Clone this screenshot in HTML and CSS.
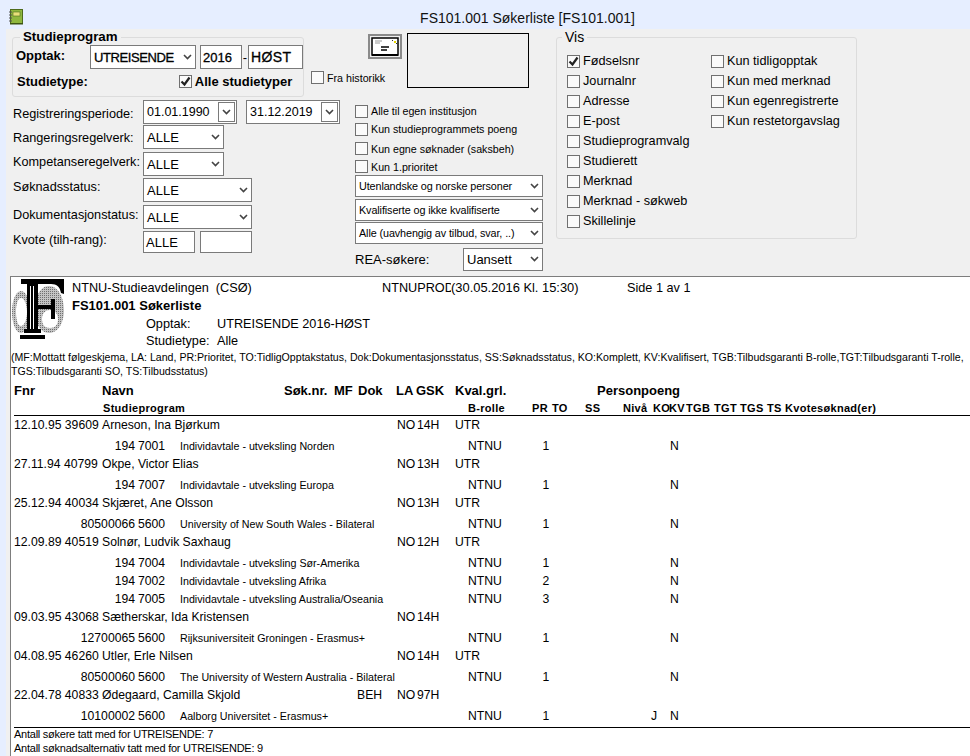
FILE: index.html
```html
<!DOCTYPE html>
<html lang="no">
<head>
<meta charset="utf-8">
<title>FS101.001 Søkerliste</title>
<link rel="stylesheet" href="styles.css">
</head>
<body>
<header class="titlebar">
  <svg class="appicon" width="14" height="16" viewBox="0 0 14 16"><rect x="1.5" y="0.5" width="12" height="14" fill="#8fb73e" stroke="#4e6b1c"/><rect x="1" y="14" width="13" height="1.5" fill="#3d5412"/><rect x="4" y="3" width="7" height="4" fill="#e8e07a" stroke="#4e6b1c" stroke-width=".6"/><path d="M0 3h3M0 6h3M0 9h3M0 12h3" stroke="#555" stroke-width="1"/></svg>
  <h1 class="wintitle">FS101.001 Søkerliste [FS101.001]</h1>
</header>
<main class="window">
  <section class="form">
    <div class="formleft">
      <div class="toprow">
        <fieldset class="group program">
          <legend class="legend-bold">Studieprogram</legend>
          <div class="prow opptak">
            <span class="blabel opptaklabel">Opptak:</span>
            <div class="sel w106 strong"><span>UTREISENDE</span><svg class="chev" width="9" height="6" viewBox="0 0 9 6"><path d="M1 1l3.5 3.5L8 1" fill="none" stroke="#444" stroke-width="1.6"/></svg></div>
            <div class="txt w42 strong">2016</div>
            <span class="dash">-</span>
            <div class="txt w55 strong wide">HØST</div>
          </div>
          <div class="prow stype">
            <span class="blabel">Studietype:</span>
            <label class="chk allestudie"><span class="cb"><svg width="11" height="11" viewBox="0 0 11 11"><path d="M1.5 5.5l3 3 5-7" fill="none" stroke="#222" stroke-width="2.2"/></svg></span><span class="blabel">Alle studietyper</span></label>
          </div>
        </fieldset>
        <label class="chk historikk"><span class="cb"></span><span class="small">Fra historikk</span></label>
        <button class="envbtn" type="button"><svg width="28" height="20" viewBox="0 0 28 20"><rect x="1" y="1" width="26" height="17" fill="#fff" stroke="#000" stroke-width="1.5"/><rect x="1" y="17" width="26" height="2" fill="#000"/><path d="M4 4h7M4 6h5" stroke="#999"/><rect x="23" y="4" width="2" height="2" fill="#e8d800"/><rect x="21" y="3" width="1" height="1" fill="#333"/><rect x="25" y="6" width="1" height="1" fill="#333"/><path d="M10 10h8M10 13h6" stroke="#000" stroke-width="1.6"/></svg></button>
        <div class="blackbox"></div>
      </div>
      <div class="lowrow">
        <div class="criteria">
          <div class="crow h25">
            <span class="clabel lbl-reg">Registreringsperiode:</span>
            <div class="datepick"><span>01.01.1990</span><span class="dd"><svg class="chev" width="9" height="6" viewBox="0 0 9 6"><path d="M1 1l3.5 3.5L8 1" fill="none" stroke="#444" stroke-width="1.6"/></svg></span></div>
            <div class="datepick second"><span>31.12.2019</span><span class="dd"><svg class="chev" width="9" height="6" viewBox="0 0 9 6"><path d="M1 1l3.5 3.5L8 1" fill="none" stroke="#444" stroke-width="1.6"/></svg></span></div>
          </div>
          <div class="crow h27"><span class="clabel lbl-rang">Rangeringsregelverk:</span><div class="sel w81"><span>ALLE</span><svg class="chev" width="9" height="6" viewBox="0 0 9 6"><path d="M1 1l3.5 3.5L8 1" fill="none" stroke="#444" stroke-width="1.6"/></svg></div></div>
          <div class="crow h26"><span class="clabel lbl-komp">Kompetanseregelverk:</span><div class="sel w81"><span>ALLE</span><svg class="chev" width="9" height="6" viewBox="0 0 9 6"><path d="M1 1l3.5 3.5L8 1" fill="none" stroke="#444" stroke-width="1.6"/></svg></div></div>
          <div class="crow h27"><span class="clabel lbl-sok">Søknadsstatus:</span><div class="sel w109"><span>ALLE</span><svg class="chev" width="9" height="6" viewBox="0 0 9 6"><path d="M1 1l3.5 3.5L8 1" fill="none" stroke="#444" stroke-width="1.6"/></svg></div></div>
          <div class="crow h26"><span class="clabel lbl-dok">Dokumentasjonstatus:</span><div class="sel w109"><span>ALLE</span><svg class="chev" width="9" height="6" viewBox="0 0 9 6"><path d="M1 1l3.5 3.5L8 1" fill="none" stroke="#444" stroke-width="1.6"/></svg></div></div>
          <div class="crow h22"><span class="clabel lbl-kvo">Kvote (tilh-rang):</span><div class="txt w52 kvote">ALLE</div><div class="txt w52 kvote"></div></div>
        </div>
        <div class="filters">
          <label class="chk f19"><span class="cb"></span><span class="small">Alle til egen institusjon</span></label>
          <label class="chk f20"><span class="cb"></span><span class="small">Kun studieprogrammets poeng</span></label>
          <label class="chk f18"><span class="cb"></span><span class="small">Kun egne søknader (saksbeh)</span></label>
          <label class="chk f17"><span class="cb"></span><span class="small">Kun 1.prioritet</span></label>
          <div class="sel fsel"><span>Utenlandske og norske personer</span><svg class="chev" width="9" height="6" viewBox="0 0 9 6"><path d="M1 1l3.5 3.5L8 1" fill="none" stroke="#444" stroke-width="1.6"/></svg></div>
          <div class="sel fsel"><span>Kvalifiserte og ikke kvalifiserte</span><svg class="chev" width="9" height="6" viewBox="0 0 9 6"><path d="M1 1l3.5 3.5L8 1" fill="none" stroke="#444" stroke-width="1.6"/></svg></div>
          <div class="sel fsel"><span>Alle (uavhengig av tilbud, svar, ..)</span><svg class="chev" width="9" height="6" viewBox="0 0 9 6"><path d="M1 1l3.5 3.5L8 1" fill="none" stroke="#444" stroke-width="1.6"/></svg></div>
          <div class="rearow"><span class="clabel rea-label">REA-søkere:</span><div class="sel rea"><span>Uansett</span><svg class="chev" width="9" height="6" viewBox="0 0 9 6"><path d="M1 1l3.5 3.5L8 1" fill="none" stroke="#444" stroke-width="1.6"/></svg></div></div>
        </div>
      </div>
    </div>
    <fieldset class="group vis">
      <legend class="legend-plain">Vis</legend>
      <div class="viscols">
        <div class="viscol first">
          <label class="chk vrow"><span class="cb"><svg width="11" height="11" viewBox="0 0 11 11"><path d="M1.5 5.5l3 3 5-7" fill="none" stroke="#222" stroke-width="2.2"/></svg></span><span>Fødselsnr</span></label>
          <label class="chk vrow"><span class="cb"></span><span>Journalnr</span></label>
          <label class="chk vrow"><span class="cb"></span><span>Adresse</span></label>
          <label class="chk vrow"><span class="cb"></span><span>E-post</span></label>
          <label class="chk vrow"><span class="cb"></span><span>Studieprogramvalg</span></label>
          <label class="chk vrow"><span class="cb"></span><span>Studierett</span></label>
          <label class="chk vrow"><span class="cb"></span><span>Merknad</span></label>
          <label class="chk vrow"><span class="cb"></span><span>Merknad - søkweb</span></label>
          <label class="chk vrow"><span class="cb"></span><span>Skillelinje</span></label>
        </div>
        <div class="viscol">
          <label class="chk vrow"><span class="cb"></span><span>Kun tidligopptak</span></label>
          <label class="chk vrow"><span class="cb"></span><span>Kun med merknad</span></label>
          <label class="chk vrow"><span class="cb"></span><span>Kun egenregistrerte</span></label>
          <label class="chk vrow"><span class="cb"></span><span>Kun restetorgavslag</span></label>
        </div>
      </div>
    </fieldset>
  </section>
  <section class="report">
    <div class="rephead">
      <svg class="logo" width="52" height="62" viewBox="0 0 52 62">
        <defs><pattern id="stip" width="2" height="2" patternUnits="userSpaceOnUse"><rect width="2" height="2" fill="#c4c4c4"/><rect width="1" height="1" fill="#707070"/></pattern></defs>
        <path fill-rule="evenodd" d="M9 12c5 0 9 9 9 21s-4 21-9 21-9-9-9-21 4-21 9-21zm0 7c-3 0-5 6-5 14s2 14 5 14 6-6 6-14-3-14-6-14z" fill="url(#stip)"/>
        <path fill-rule="evenodd" d="M37 7c9 0 15 11 15 24s-6 23-15 23-14-10-14-23S28 7 37 7zm1 24c-4 0-8 3-8 9s3 9 8 9 8-3 8-9-4-9-8-9z" fill="url(#stip)"/>
        <path d="M9 0h43v15l-3-1c-1-6-4-9-10-9H9z" fill="#000"/>
        <rect x="15" y="3" width="11" height="51" fill="#000"/>
        <path d="M18.500 7v43M21.500 7v43" stroke="#fff"/>
        <rect x="26" y="26" width="16" height="4" fill="#000"/>
        <path d="M39 20h4v20h-4z" fill="#000"/>
        <rect x="12" y="50" width="17" height="4" fill="#000"/>
        <rect x="8" y="54" width="25" height="2" fill="#fff"/>
        <rect x="8" y="56" width="25" height="4" fill="#000"/>
      </svg>
      <div class="headtext">
        <div class="hline1"><span class="hcell org">NTNU-Studieavdelingen&nbsp; (CSØ)</span><span class="hcell dbname">NTNUPROD</span><span class="hcell stamp">(30.05.2016 Kl. 15:30)</span><span class="hcell">Side 1 av 1</span></div>
        <div class="reptitle">FS101.001 Søkerliste</div>
        <div class="meta"><span class="metakey">Opptak:</span><span>UTREISENDE 2016-HØST</span></div>
        <div class="meta"><span class="metakey">Studietype:</span><span>Alle</span></div>
      </div>
    </div>
    <p class="legendnote">(MF:Mottatt følgeskjema, LA: Land, PR:Prioritet, TO:TidligOpptakstatus, Dok:Dokumentasjonsstatus, SS:Søknadsstatus, KO:Komplett, KV:Kvalifisert, TGB:Tilbudsgaranti B-rolle,TGT:Tilbudsgaranti T-rolle,<br>TGS:Tilbudsgaranti SO, TS:Tilbudsstatus)</p>
    <div class="th1"><span>Fnr</span><span>Navn</span><span>Søk.nr.</span><span>MF</span><span>Dok</span><span>LA</span><span>GSK</span><span>Kval.grl.</span><span>Personpoeng</span></div>
    <div class="th2"><span>Studieprogram</span><span>B-rolle</span><span>PR</span><span>TO</span><span>SS</span><span>Nivå</span><span>KO</span><span>KV</span><span>TGB</span><span>TGT</span><span>TGS</span><span>TS</span><span>Kvotesøknad(er)</span></div>

    <div class="person"><span>12.10.95 39609</span><span>Arneson, Ina Bjørkum</span><span></span><span>NO</span><span>14H</span><span>UTR</span></div>
    <div class="sub"><span>194</span><span>7001</span><span class="prog">Individavtale - utveksling Norden</span><span>NTNU</span><span class="pr">1</span><span></span><span>N</span></div>
    <div class="person"><span>27.11.94 40799</span><span>Okpe, Victor Elias</span><span></span><span>NO</span><span>13H</span><span>UTR</span></div>
    <div class="sub"><span>194</span><span>7007</span><span class="prog">Individavtale - utveksling Europa</span><span>NTNU</span><span class="pr">1</span><span></span><span>N</span></div>
    <div class="person"><span>25.12.94 40034</span><span>Skjæret, Ane Olsson</span><span></span><span>NO</span><span>13H</span><span>UTR</span></div>
    <div class="sub"><span>80500066</span><span>5600</span><span class="prog">University of New South Wales - Bilateral</span><span>NTNU</span><span class="pr">1</span><span></span><span>N</span></div>
    <div class="person"><span>12.09.89 40519</span><span>Solnør, Ludvik Saxhaug</span><span></span><span>NO</span><span>12H</span><span>UTR</span></div>
    <div class="sub"><span>194</span><span>7004</span><span class="prog">Individavtale - utveksling Sør-Amerika</span><span>NTNU</span><span class="pr">1</span><span></span><span>N</span></div>
    <div class="sub"><span>194</span><span>7002</span><span class="prog">Individavtale - utveksling Afrika</span><span>NTNU</span><span class="pr">2</span><span></span><span>N</span></div>
    <div class="sub"><span>194</span><span>7005</span><span class="prog">Individavtale - utveksling Australia/Oseania</span><span>NTNU</span><span class="pr">3</span><span></span><span>N</span></div>
    <div class="person"><span>09.03.95 43068</span><span>Sætherskar, Ida Kristensen</span><span></span><span>NO</span><span>14H</span><span></span></div>
    <div class="sub"><span>12700065</span><span>5600</span><span class="prog">Rijksuniversiteit Groningen - Erasmus+</span><span>NTNU</span><span class="pr">1</span><span></span><span>N</span></div>
    <div class="person"><span>04.08.95 46260</span><span>Utler, Erle Nilsen</span><span></span><span>NO</span><span>14H</span><span>UTR</span></div>
    <div class="sub"><span>80500060</span><span>5600</span><span class="prog">The University of Western Australia - Bilateral</span><span>NTNU</span><span class="pr">1</span><span></span><span>N</span></div>
    <div class="person"><span>22.04.78 40833</span><span>Ødegaard, Camilla Skjold</span><span>BEH</span><span>NO</span><span>97H</span><span></span></div>
    <div class="sub"><span>10100002</span><span>5600</span><span class="prog">Aalborg Universitet - Erasmus+</span><span>NTNU</span><span class="pr">1</span><span class="ko">J</span><span>N</span></div>

    <div class="totals">
      <div>Antall søkere tatt med for UTREISENDE: 7</div>
      <div>Antall søknadsalternativ tatt med for UTREISENDE: 9</div>
    </div>
  </section>
</main>
</body>
</html>
```
FILE: styles.css
```css
* { box-sizing: border-box; }
html, body { margin: 0; height: 756px; overflow: hidden; }
body {
  width: 970px;
  background: #e6eeff;
  font-family: "Liberation Sans", Arial, sans-serif;
  font-size: 13px;
  color: #000;
}
.titlebar { height: 29px; position: relative; display: flex; align-items: center; justify-content: center; }
.appicon { position: absolute; left: 9px; top: 9px; }
.wintitle { margin: 0 0 0 85px; font-size: 14px; font-weight: 400; color: #111; line-height: 37px; height: 29px; }
.window { margin-left: 6px; height: 727px; background: #f0f0f0; display: flex; flex-direction: column; }

/* form */
.form { height: 247px; padding: 8px 0 0 6px; display: flex; flex: none; }
.formleft { width: 544px; flex: none; }
.toprow { display: flex; height: 63px; align-items: flex-start; }
.group { margin: 0; padding: 0; border: 1px solid #dcdcdc; border-radius: 3px; position: relative; min-width: 0; }
.legend-bold { font-weight: 700; font-size: 13.3px; padding: 0 3px; margin-left: 7px; line-height: 8px; height: 8px; }
.legend-plain { font-size: 14px; padding: 0 3px; margin-left: 5px; line-height: 8px; height: 8px; }
.program { width: 292px; height: 64px; margin-top: -4px; flex: none; }
.prow { display: flex; align-items: center; }
.opptak { height: 24px; margin-top: 4px; padding-left: 3px; }
.opptaklabel { width: 74px; margin-top: -4px; }
.stype { height: 24px; padding: 1px 0 0 4px; }
.blabel { font-weight: 700; font-size: 13px; white-space: nowrap; }
.allestudie { margin-left: 91px; }
.sel, .txt { background: #fff; border: 1px solid #7a7a7a; height: 24px; display: flex; align-items: center; flex: none; font-size: 13px; overflow: hidden; }
.sel { justify-content: space-between; padding: 0 3px 0 3px; white-space: nowrap; }
.txt { padding-left: 2px; }
.strong { font-weight: 400; letter-spacing: -.4px; -webkit-text-stroke: .3px #000; }
.strong.w42 { letter-spacing: 0; }
.wide { font-size: 14px; letter-spacing: .4px; }
.chev { flex: none; }
.w106 { width: 106px; margin-right: 4px; }
.w42 { width: 42px; }
.w55 { width: 55px; }
.w81 { width: 81px; }
.w109 { width: 109px; }
.w52 { width: 52px; height: 22px; }
.w52 + .w52 { margin-left: 5px; }
.kvote { padding-left: 2px; }
.dash { width: 6px; text-align: center; font-size: 13px; flex: none; }
.chk { display: flex; align-items: center; white-space: nowrap; gap: 3px; }
.cb { width: 13px; height: 13px; border: 1px solid #707070; background: #fafafa; display: flex; align-items: center; justify-content: center; flex: none; }
.small { font-size: 10.7px; }
.historikk { width: 57px; margin: 34px 0 0 7px; flex: none; z-index: 1; }
.envbtn { width: 34px; height: 25px; margin: -3px 0 0 0; padding: 0; border: 2px solid #8a8a8a; background: #f0f0f0; display: flex; align-items: center; justify-content: center; flex: none; }
.blackbox { width: 122px; height: 55px; margin: -4px 0 0 5px; border: 1px solid #000; flex: none; }

.lowrow { display: flex; }
.criteria { width: 343px; flex: none; padding-left: 1px; }
.crow { display: flex; align-items: flex-start; }
.clabel { font-size: 12.7px; white-space: nowrap; display: block; }
.crow .clabel { width: 130px; flex: none; }
.lbl-reg { margin-top: 7px; }
.lbl-rang { margin-top: 6px; }
.lbl-komp { margin-top: 3px; }
.lbl-sok { margin-top: 2px; }
.lbl-dok { margin-top: 3px; }
.lbl-kvo { margin-top: 2px; }
.h25 { height: 25px; }
.h27 { height: 27px; }
.h26 { height: 26px; }
.h22 { height: 22px; }
.datepick { width: 94px; height: 24px; margin-right: 9px; border: 1px solid #7a7a7a; background: #fff; padding: 1px 1px 1px 3px; display: flex; justify-content: space-between; align-items: center; font-size: 12.5px; flex: none; }
.dd { width: 17px; height: 20px; border: 1px solid #7a7a7a; display: flex; align-items: center; justify-content: center; }
.filters { width: 188px; flex: none; display: flex; flex-direction: column; }
.f19 { height: 19px; padding-top: 3px; }
.f20 { height: 20px; }
.f18 { height: 19px; }
.f17 { height: 17px; }
.fsel { width: 188px; height: 22px; margin-bottom: 1.5px; padding-left: 3px; font-size: 10.8px; letter-spacing: -.1px; }
.rearow { display: flex; justify-content: space-between; align-items: center; height: 23px; margin-top: 2px; }
.rea { width: 80px; height: 23px; }
.rea-label { font-size: 13px; }
.vis { width: 301px; height: 206px; margin-top: -4px; flex: none; }
.viscols { display: flex; padding: 10px 0 0 10px; }
.viscol.first { width: 144px; }
.vrow { height: 20px; font-size: 12.7px; }

/* report */
.report { flex: 1; background: #fff; margin-left: 4px; border-top: 1px solid #7d7d7d; border-left: 1px solid #7d7d7d; overflow: hidden; }
.rephead { display: flex; height: 73px; padding: 2px 0 0 1px; }
.logo { flex: none; }
.headtext { margin-left: 8px; font-size: 12.7px; }
.hline1 { display: flex; height: 17px; align-items: center; }
.hcell { white-space: nowrap; }
.org { width: 310px; }
.dbname { width: 69px; overflow: hidden; }
.stamp { width: 176px; font-size: 12.9px; }
.reptitle { font-weight: 700; height: 18px; line-height: 20px; font-size: 13px; }
.meta { display: flex; height: 17px; padding-left: 74px; align-items: center; position: relative; top: 1px; }
.metakey { width: 71px; }
.legendnote { margin: 0; font-size: 10.6px; line-height: 14px; height: 28px; white-space: nowrap; }
.th1, .th2, .person, .sub { display: grid; white-space: nowrap; margin-left: 3px; }
.th1 { font-weight: 700; font-size: 13px; height: 20px; align-items: center; margin-top: 2px; grid-template-columns: 88px 182px 50px 24px 38px 20px 39px 142px 1fr; }
.th2 { font-weight: 700; font-size: 11px; letter-spacing: .3px; height: 16px; align-items: center; padding-left: 89px; border-bottom: 1px solid #000; grid-template-columns: 365px 64px 20px 33px 38px 30px 16px 17px 28px 26px 27px 18px 1fr; }
.person { height: 17px; align-items: center; font-size: 12.2px; grid-template-columns: 88px 255px 40px 20px 38px 1fr; }
.sub { height: 18px; align-items: center; font-size: 12.2px; grid-template-columns: 121px 30px 303px 72px 12px 118px 1fr; }
.person + .sub { margin-top: 4px; }
.sub > :nth-child(-n+2) { text-align: right; }
.prog { font-size: 10.7px; padding-left: 15px; }
.pr { text-align: center; }
.ko { text-align: right; padding-right: 13px; }
.totals { margin: 2px 0 0 3px; border-top: 1px solid #000; font-size: 11px; letter-spacing: -.25px; line-height: 13.5px; }
```
